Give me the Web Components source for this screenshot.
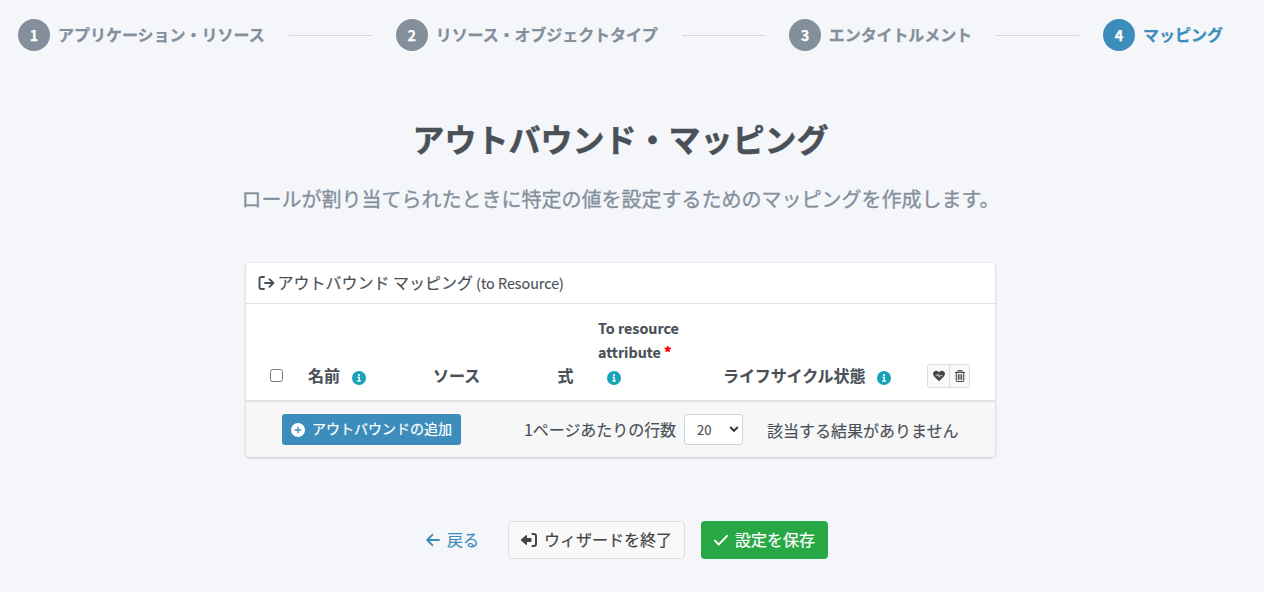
<!DOCTYPE html>
<html lang="ja">
<head>
<meta charset="utf-8">
<title>アウトバウンド・マッピング</title>
<style>
  body {
    margin: 0;
    background: #f4f6fa;
    color: #495057;
    font: 16px/24px "Noto Sans CJK JP", sans-serif;
  }
</style>
</head>
<body>
<mapping-wizard></mapping-wizard>
<script>
const icons = {
  out: ['0 0 16 16', '<path d="M5.500 2H3Q1 2 1 4v8q0 2 2 2h2.500M6.500 8h8.500M11 4.200 15 8l-4 3.800" fill="none" stroke="currentColor" stroke-width="1.900" stroke-linecap="round" stroke-linejoin="round"/>'],
  exit: ['0 0 16 16', '<path d="M11.500 2H13q2 0 2 2v8q0 2-2 2h-1.500" fill="none" stroke="currentColor" stroke-width="2" stroke-linecap="round"/><path d="M.3 7.300 5 3.200q1-.6 1 .6V6H9.500q1 0 1 1v2q0 1-1 1H6v2.200q0 1.200-1 .6L.3 8.700q-.6-.7 0-1.400z" fill="currentColor"/>'],
  back: ['0 0 14 16', '<path d="M13 8H1.200M6.300 2.800 1.200 8l5.100 5.200" fill="none" stroke="currentColor" stroke-width="1.900" stroke-linecap="round" stroke-linejoin="round"/>'],
  check: ['0 0 14 16', '<path d="M1 8.600 4.800 12.500 13 3.800" fill="none" stroke="currentColor" stroke-width="1.900" stroke-linecap="round" stroke-linejoin="round"/>'],
  info: ['0 0 16 16', '<circle cx="8" cy="8" r="8" fill="currentColor"/><circle cx="8" cy="4.700" r="1.200" fill="#fff"/><path d="M6.300 7.300H8.300V11.400M6 11.500h4" fill="none" stroke="#fff" stroke-width="1.600"/>'],
  plus: ['0 0 16 16', '<circle cx="8" cy="8" r="8" fill="currentColor"/><path d="M8 4.800v6.400M4.800 8h6.400" stroke="#3c8dbc" stroke-width="1.500" stroke-linecap="round"/>'],
  heart: ['0 0 16 16', '<path d="M8 15 1.600 8.500C-.5 6.300-.3 3.300 1.500 1.900 3.300.500 6 .800 8 3.100c2-2.300 4.700-2.600 6.500-1.200 1.800 1.400 2 4.400-.1 6.600z" fill="currentColor"/><path d="M3.500 7.600h1.800l1.200-2 1.900 4 1.500-2.800.9.800h1.700" fill="none" stroke="#f8f9fa" stroke-width="1"/>'],
  trash: ['0 0 14 16', '<path d="M.8 3.200h12.400M4.300 3V1.700Q4.300.8 5.200.8h3.600q.9 0 .9.900V3M2 3.500v10q0 1.700 1.700 1.700h6.600q1.700 0 1.700-1.700v-10M4.800 6v6.500M7 6v6.500M9.200 6v6.500" fill="none" stroke="currentColor" stroke-width="1.400" stroke-linecap="round"/>'],
};

class FaIcon extends HTMLElement {
  constructor() {
    super();
    const [box, shape] = icons[this.getAttribute('name')];
    this.attachShadow({ mode: 'open' }).innerHTML = `
      <style>
        :host { display: inline-block; flex: none; width: 16px; height: 16px; }
        svg { display: block; width: 100%; height: 100%; }
      </style>
      <svg viewBox="${box}" aria-hidden="true">${shape}</svg>
    `;
  }
}

class WizardStep extends HTMLElement {
  constructor() {
    super();
    this.attachShadow({ mode: 'open' }).innerHTML = `
      <style>
        :host {
          display: flex;
          align-items: center;
          gap: 8px;
          color: #838f9b;
          font-weight: 700;
          letter-spacing: -0.02px;
          white-space: nowrap;
          -webkit-text-stroke: .25px;
        }
        :host([number="2"]) { letter-spacing: -0.09px; }
        :host([number="3"]) { letter-spacing: -0.1px; }
        :host([active]) { color: #3c8dbc; }
        .number {
          width: 32px;
          height: 32px;
          border-radius: 50%;
          background: #838f9b;
          color: #fff;
          font-size: 14.4px;
          line-height: 32px;
          text-align: center;
        }
        .label { padding-bottom: 2px; }
        :host([active]) .number { background: #3c8dbc; }
      </style>
      <span class="number">${this.getAttribute('number')}</span>
      <span class="label"><slot></slot></span>
    `;
  }
}

class WizardSteps extends HTMLElement {
  constructor() {
    super();
    this.attachShadow({ mode: 'open' }).innerHTML = `
      <style>
        :host {
          display: flex;
          align-items: center;
          gap: 24px;
          height: 32px;
          padding: 19px 41px 0 18px;
        }
        hr { flex: 1; height: 1px; margin: 1px 0 0; border: 0; background: #d3d7dc; }
      </style>
      <wizard-step number="1">アプリケーション・リソース</wizard-step><hr>
      <wizard-step number="2">リソース・オブジェクトタイプ</wizard-step><hr>
      <wizard-step number="3">エンタイトルメント</wizard-step><hr>
      <wizard-step number="4" active>マッピング</wizard-step>
    `;
  }
}

class ActionButton extends HTMLElement {
  constructor() {
    super();
    this.attachShadow({ mode: 'open' }).innerHTML = `
      <style>
        :host { display: block; flex: none; }
        button {
          display: flex;
          align-items: center;
          gap: 7px;
          box-sizing: border-box;
          width: 100%;
          height: 38px;
          padding: 0 12px;
          border: 1px solid transparent;
          border-radius: 4px;
          background: none;
          color: #3c8dbc;
          font: inherit;
          white-space: nowrap;
          -webkit-text-stroke: .2px;
        }
        .label { padding-bottom: 2px; }
        fa-icon[name="back"], fa-icon[name="check"] { width: 14px; }
        :host([kind="light"]) button { background: #f8f9fa; border-color: #ddd; color: #444; }
        :host([kind="success"]) button { background: #28a745; color: #fff; }
        :host([kind="primary"]) button { height: 31px; padding: 0 8px; border-radius: 3px; background: #3c8dbc; color: #fff; font-size: 14px; }
        :host([kind="primary"]) .label { padding-bottom: 4px; }
        :host([kind="primary"]) fa-icon { width: 14px; height: 14px; }
      </style>
      <button type="button"><fa-icon name="${this.getAttribute('icon')}"></fa-icon><span class="label"><slot></slot></span></button>
    `;
  }
}

class MappingTable extends HTMLElement {
  constructor() {
    super();
    this.attachShadow({ mode: 'open' }).innerHTML = `
      <style>
        :host {
          display: block;
          width: 749px;
          height: 194px;
          overflow: hidden;
          border-radius: 4px;
          background: #fff;
          box-shadow: 0 0 1px rgba(0, 0, 0, .13), 0 1px 3px rgba(0, 0, 0, .2);
          white-space: nowrap;
        }
        header {
          display: flex;
          align-items: center;
          height: 40px;
          padding: 0 12px;
          border-bottom: 1px solid #dfdfdf;
          -webkit-text-stroke: .15px;
        }
        header fa-icon { width: 17px; margin-right: 2.500px; }
        header .title { padding-bottom: 2px; }
        .latin { font-size: 14.3px; }
        header .latin { margin-left: 3px; }
        .columns {
          display: grid;
          grid-template-columns: 38px 125px 124.500px 40.500px 125px 204px 1fr;
          align-items: end;
          box-sizing: border-box;
          height: 98px;
          padding: 0 24px 12px;
          border-bottom: 2px solid #dee2e6;
          font-weight: 700;
          -webkit-text-stroke: .15px;
        }
        .columns > div { display: flex; align-items: flex-start; min-height: 24px; line-height: 22px; }
        .columns fa-icon[name="info"] { width: 14px; height: 14px; margin: 7px 0 0 12px; color: #17a2b8; }
        .columns .check { align-items: flex-end; }
        input { width: 13px; height: 13px; margin: 0 0 6px; }
        .columns .target { display: block; }
        .target .latin { display: block; line-height: 24px; }
        .columns .target fa-icon[name="info"] { display: block; margin: 7px 0 3px 9px; }
        .lifecycle { letter-spacing: -.1px; }
        b { color: red; }
        .columns .tools {
          align-items: center;
          box-sizing: border-box;
          width: 43px;
          height: 24px;
          border: 1px solid #ddd;
          border-radius: 3px;
          background: #f8f9fa;
          color: #444;
        }
        .tools span { display: flex; flex: 1; height: 100%; align-items: center; justify-content: center; }
        .tools span + span { flex: 0 0 19px; border-left: 1px solid #ddd; }
        .tools fa-icon { width: 12px; height: 12px; }
        footer {
          display: flex;
          align-items: center;
          box-sizing: border-box;
          height: 55px;
          padding: 0 24px 0 36px;
          background: #f7f7f7;
          -webkit-text-stroke: .15px;
        }
        action-button { width: 179px; margin-right: 63px; }
        .pager { width: 153px; padding-bottom: 1px; letter-spacing: -.05px; }
        .select {
          display: flex;
          flex: none;
          align-items: center;
          justify-content: space-between;
          box-sizing: border-box;
          width: 59px;
          height: 31px;
          margin: 0 24px 0 7px;
          padding: 1px 3px 0 12px;
          border: 1px solid #ced4da;
          border-radius: 3px;
          background: #fff;
          font-size: 13px;
        }
        .select svg { width: 10px; height: 10px; margin-bottom: 2px; }
        .result { padding-top: 1px; }
      </style>
      <header><fa-icon name="out"></fa-icon><span class="title">アウトバウンド マッピング</span><span class="latin">(to Resource)</span></header>
      <div class="columns">
        <div class="check"><input type="checkbox"></div>
        <div>名前<fa-icon name="info"></fa-icon></div>
        <div>ソース</div>
        <div>式</div>
        <div class="target">
          <span class="latin">To resource</span><span class="latin">attribute <b>*</b></span>
          <fa-icon name="info"></fa-icon>
        </div>
        <div class="lifecycle">ライフサイクル状態<fa-icon name="info"></fa-icon></div>
        <div class="tools"><span><fa-icon name="heart"></fa-icon></span><span><fa-icon name="trash"></fa-icon></span></div>
      </div>
      <footer>
        <action-button kind="primary" icon="plus">アウトバウンドの追加</action-button>
        <span class="pager">1ページあたりの行数</span>
        <div class="select">20<svg viewBox="0 0 10 10"><path d="M1.200 3 5 6.800 8.800 3" fill="none" stroke="#343a40" stroke-width="2"/></svg></div>
        <span class="result">該当する結果がありません</span>
      </footer>
    `;
  }
}

class MappingWizard extends HTMLElement {
  constructor() {
    super();
    this.attachShadow({ mode: 'open' }).innerHTML = `
      <style>
        :host { display: flex; flex-direction: column; height: 592px; overflow: hidden; }
        main { display: flex; flex-direction: column; align-items: center; width: 1241px; }
        h1 { margin: 68px 0 0; font-size: 32px; font-weight: 700; line-height: 38px; -webkit-text-stroke: .5px; }
        p { margin: 27px 0 0; color: #838f9b; font-size: 20px; line-height: 30px; -webkit-text-stroke: .3px; }
        mapping-table { margin-top: 49px; }
        nav { display: flex; align-self: flex-start; gap: 16px; margin: 64px 0 0 413px; }
        .back { width: 79px; }
        .exit { width: 177px; }
        .save { width: 127px; }
      </style>
      <wizard-steps></wizard-steps>
      <main>
        <h1>アウトバウンド・マッピング</h1>
        <p>ロールが割り当てられたときに特定の値を設定するためのマッピングを作成します。</p>
        <mapping-table></mapping-table>
        <nav>
          <action-button class="back" icon="back">戻る</action-button>
          <action-button class="exit" kind="light" icon="exit">ウィザードを終了</action-button>
          <action-button class="save" kind="success" icon="check">設定を保存</action-button>
        </nav>
      </main>
    `;
  }
}

customElements.define('fa-icon', FaIcon);
customElements.define('wizard-step', WizardStep);
customElements.define('wizard-steps', WizardSteps);
customElements.define('action-button', ActionButton);
customElements.define('mapping-table', MappingTable);
customElements.define('mapping-wizard', MappingWizard);
</script>
</body>
</html>
